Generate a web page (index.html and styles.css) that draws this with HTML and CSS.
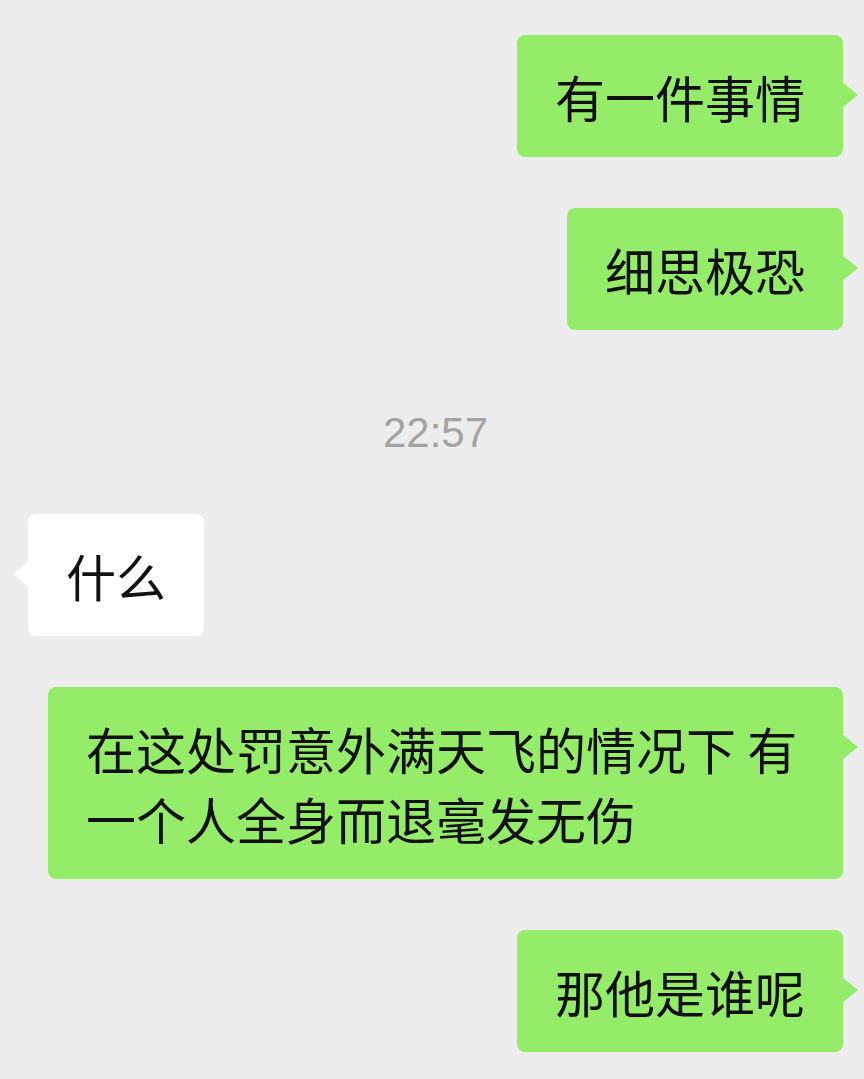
FILE: index.html
```html
<!DOCTYPE html>
<html lang="zh-CN">
<head>
  <title>聊天</title>
  <meta charset="UTF-8">
  <meta name="viewport" content="width=device-width, initial-scale=1">
  <link rel="stylesheet" href="styles.css">
</head>
<body>
  <div class="chat">
    <div class="bubble me">有一件事情</div>
    <div class="bubble me">细思极恐</div>
    <div class="time">22:57</div>
    <div class="bubble them">什么</div>
    <div class="bubble me">在这处罚意外满天飞的情况下 有一个人全身而退毫发无伤</div>
    <div class="bubble me">那他是谁呢</div>
  </div>
</body>
</html>
```

FILE: styles.css
```css
/* halaman */
body {
  margin: 0;
  background: #ededed;
  font-family: "Noto Sans CJK SC", "Noto Sans", sans-serif;
}

/* daftar pesan */
.chat {
  display: flex;
  flex-direction: column;
  gap: 51px;
  padding: 35px 21px 0 28px;
}

/* gelembung pesan */
.bubble {
  position: relative;
  box-sizing: border-box;
  max-width: 795px;
  padding: 26px 38px;
  border-radius: 8px;
  font-size: 50px;
  line-height: 70px;
  color: #111;
}

.bubble::after {
  content: "";
  position: absolute;
  top: 47px;
  width: 16px;
  height: 26px;
}

/* pesan sendiri */
.bubble.me {
  align-self: flex-end;
  background: #95ec69;
}

.bubble.me::after {
  right: -15px;
  background: #95ec69;
  clip-path: polygon(0 0, 100% 50%, 0 100%);
}

/* pesan lawan */
.bubble.them {
  align-self: flex-start;
  background: #fff;
}

.bubble.them::after {
  left: -15px;
  background: #fff;
  clip-path: polygon(100% 0, 0 50%, 100% 100%);
}

/* waktu */
.time {
  align-self: center;
  padding: 31px 0 9px;
  font-family: "Liberation Sans", Arial, sans-serif;
  font-size: 42px;
  line-height: 42px;
  color: #a3a3a3;
}
```
